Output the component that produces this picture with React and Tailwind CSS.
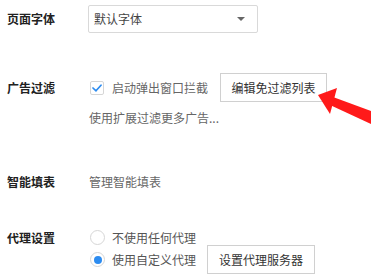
import React from "react";

export default function App() {
  return (
    <div className="relative w-[371px] h-[278px] overflow-hidden bg-white text-[12px] leading-[16px] text-[#333] font-['Microsoft_YaHei','Noto_Sans_CJK_SC',sans-serif]">
      {/* 页面字体 */}
      <div className="flex items-center mt-[5px]">
        <div className="w-[88px] pl-[7px] font-bold text-[#222]">页面字体</div>
        <div className="w-[170px] h-[28px] border border-[#d9d9d9] rounded-[2px] flex items-center justify-between pl-[5px] pr-[12px] text-[#444]">
          <span>默认字体</span>
          <span className="w-0 h-0 border-l-[4px] border-r-[4px] border-t-[4px] border-l-transparent border-r-transparent border-t-[#666]"></span>
        </div>
      </div>

      {/* 广告过滤 */}
      <div className="flex items-start mt-[40px]">
        <div className="w-[88px] pl-[7px] h-[29px] flex items-center font-bold text-[#222]">广告过滤</div>
        <div className="flex flex-col">
          <div className="flex items-center h-[29px]">
            <div className="ml-[2px] w-[14px] h-[14px] border border-[#d6d6d6] rounded-[2px] flex items-center justify-center">
              <svg width="10" height="8" viewBox="0 0 10 8">
                <path d="M1 4 L4 6.8 L9 1.2" fill="none" stroke="#2d8cf0" strokeWidth="1.7" strokeLinecap="round" strokeLinejoin="round" />
              </svg>
            </div>
            <span className="ml-[8px] text-[#666]">启动弹出窗口拦截</span>
            <button className="ml-[12px] w-[107px] h-[29px] border border-[#d0d0d0] bg-white text-[#333]">编辑免过滤列表</button>
          </div>
          <div className="mt-[8px] ml-[1px] text-[#666]">使用扩展过滤更多广告...</div>
        </div>
      </div>

      {/* 智能填表 */}
      <div className="flex items-center mt-[48px]">
        <div className="w-[88px] pl-[7px] font-bold text-[#222]">智能填表</div>
        <div className="ml-[1px] text-[#666]">管理智能填表</div>
      </div>

      {/* 代理设置 */}
      <div className="flex items-start mt-[40px]">
        <div className="w-[88px] pl-[7px] h-[15px] flex items-center font-bold text-[#222]">代理设置</div>
        <div className="flex flex-col">
          <div className="flex items-center h-[15px]">
            <span className="ml-[2px] w-[15px] h-[15px] rounded-full border border-[#d6d6d6]"></span>
            <span className="ml-[7px] text-[#555]">不使用任何代理</span>
          </div>
          <div className="flex items-center h-[29px]">
            <span className="ml-[2px] w-[15px] h-[15px] rounded-full border border-[#d6d6d6] flex items-center justify-center">
              <span className="w-[8px] h-[8px] rounded-full bg-[#2d8cf0]"></span>
            </span>
            <span className="ml-[7px] text-[#555]">使用自定义代理</span>
            <button className="ml-[11px] w-[108px] h-[29px] border border-[#d0d0d0] bg-white text-[#333]">设置代理服务器</button>
          </div>
        </div>
      </div>

      {/* red arrow */}
      <svg className="absolute left-0 top-0" width="371" height="278" viewBox="0 0 371 278">
        <polygon points="333,97 371,111 371,124 330,105" fill="#ff1a1a" />
        <polygon points="318,95 337,88 330,114" fill="#ff1a1a" />
      </svg>
    </div>
  );
}
